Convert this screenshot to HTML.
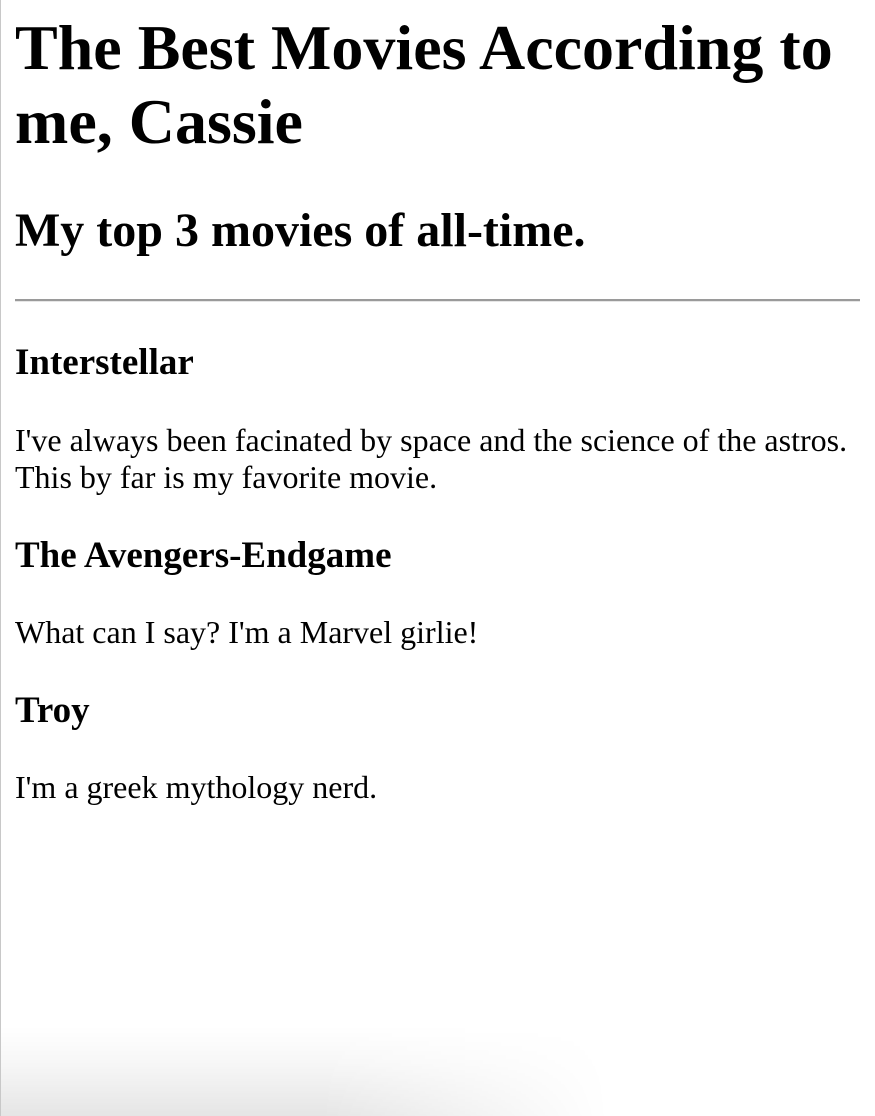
<!DOCTYPE html>
<html><head><meta charset="utf-8"><style>
html,body{margin:0;padding:0;width:875px;height:1116px;background:#fff;overflow:hidden;position:relative}
body{font-family:"Liberation Serif",serif;color:#000}
.a{position:absolute;left:15px;margin:0;white-space:nowrap}
h1{font-size:64px;line-height:74px;font-weight:bold}
h2{font-size:48px;line-height:55px;font-weight:bold}
h3{font-size:37px;line-height:43px;font-weight:bold}
p{font-size:32px;line-height:37px}
.edge{position:absolute;left:0;top:0;width:1px;height:1116px;background:#c8c8c8}
.fade{position:absolute;left:1px;bottom:0;width:640px;height:90px;
background:linear-gradient(to top,rgba(0,0,0,0.1),rgba(0,0,0,0.03) 60%,rgba(0,0,0,0));
-webkit-mask-image:linear-gradient(to right,#000 0%,#000 50%,transparent 95%);mask-image:linear-gradient(to right,#000 0%,#000 50%,transparent 95%)}
hr{position:absolute;left:15px;top:299px;width:845px;margin:0;border:0;border-top:2px solid #9a9a9a;border-bottom:1px solid #e6e6e6;height:0}
</style></head><body>
<div class="edge"></div>
<div class="fade"></div>
<h1 class="a" style="top:11px">The Best Movies According to<br>me, Cassie</h1>
<h2 class="a" style="top:203px">My top 3 movies of all-time.</h2>
<hr>
<h3 class="a" style="top:341px">Interstellar</h3>
<p class="a" style="top:422px">I've always been facinated by space and the science of the astros.<br>This by far is my favorite movie.</p>
<h3 class="a" style="top:534px">The Avengers-Endgame</h3>
<p class="a" style="top:614px">What can I say? I'm a Marvel girlie!</p>
<h3 class="a" style="top:689px">Troy</h3>
<p class="a" style="top:769px">I'm a greek mythology nerd.</p>
</body></html>
